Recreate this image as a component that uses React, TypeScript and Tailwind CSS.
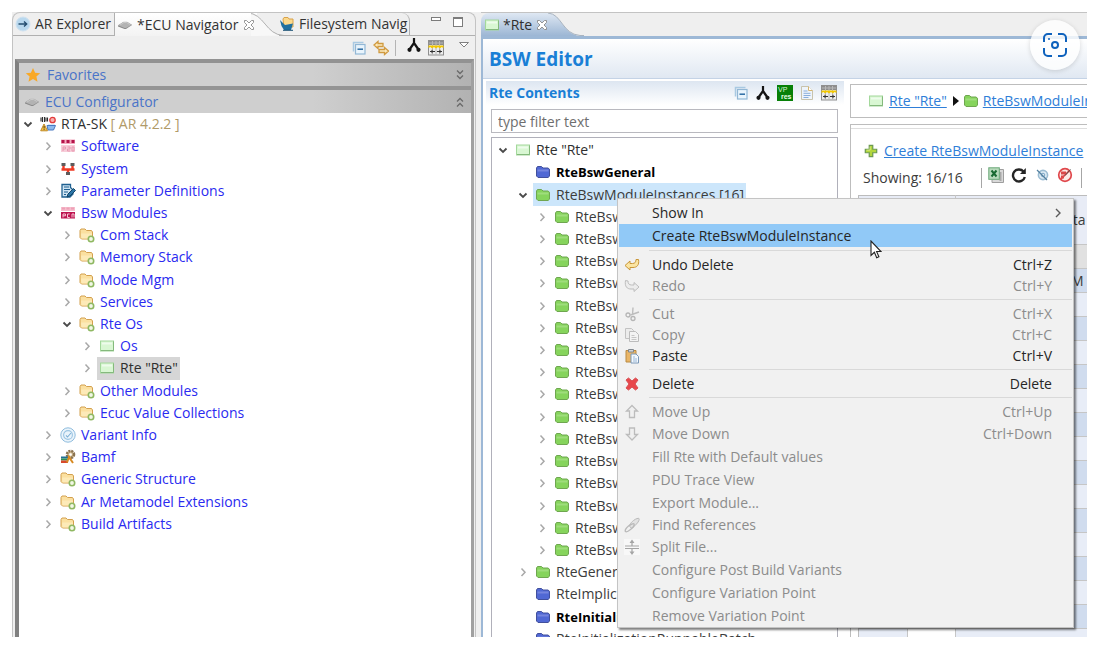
import { useState } from 'react'
import type { ReactNode } from 'react'

/* ---------- Icons ---------- */

function Svg({ children, className = 'w-4 h-4' }: { children: ReactNode; className?: string }) {
  return (
    <svg viewBox="0 0 16 16" className={`${className} shrink-0`} fill="none" aria-hidden="true">
      {children}
    </svg>
  )
}

const ModuleIcon = () => (
  <Svg>
    <rect x="1.5" y="3" width="13" height="10" fill="#d9f7d3" stroke="#a3d89b" />
    <path d="M2 12.5h12.5V3.5" stroke="#84b97c" />
    <rect x="3" y="4.5" width="10" height="2" fill="#eefcec" />
  </Svg>
)

const FolderShape = ({ fill, top, stroke }: { fill: string; top: string; stroke: string }) => (
  <Svg>
    <path d="M1.5 4 2.5 2.5h4L8 4h5l1.5 1.2v7L13 13.5H3L1.5 12z" fill={fill} stroke={stroke} />
    <path d="M2.5 5.5h11v2h-11z" fill={top} />
  </Svg>
)

const GreenFolder = () => <FolderShape fill="#86d45c" top="#9fdd7c" stroke="#6fa650" />
const BlueFolder = () => <FolderShape fill="#5068d4" top="#7585de" stroke="#42509c" />

const PackageFolder = () => (
  <Svg>
    <path d="M1 3.5 2 2h4l1.5 1.5h5l1 1.5v7h-11L1 10.5z" fill="#fbe0a0" stroke="#d3a04e" />
    <path d="M2 6.5h11v5H2.500z" fill="#fdeab8" />
    <circle cx="12" cy="12" r="2.700" fill="#f2f7e6" stroke="#8fb862" strokeWidth="1.600" />
  </Svg>
)

const ProjectIcon = () => (
  <Svg>
    <path d="M1 1.500v4M2.500 1v5M4.500 1v5M6 1.500v4M7.500 1.500v4" stroke="#2e2e2e" strokeWidth="1.100" />
    <circle cx="12.500" cy="4" r="2.700" fill="#f8b0b0" stroke="#e23a3a" strokeWidth="1.300" />
    <path d="M7 9.500h8.500L13.500 14H8z" fill="#8db9ee" stroke="#4878c0" />
    <path d="M8 8.500h7" stroke="#d8e8fa" />
    <path d="M4 8 .7 14.800h6.800z" fill="#f2c34c" stroke="#c08a26" />
    <path d="M4.100 10v2.500M4.100 13.200v.8" stroke="#5a3c08" />
  </Svg>
)

const SoftwareIcon = () => (
  <Svg>
    <rect x="1" y="1.500" width="14" height="4.500" fill="#f3a9bf" />
    <path d="M1.500 2h3v3h-3zM6.500 2h3v3h-3zM11.500 2h3v3h-3z" fill="#b4134a" />
    <rect x="1" y="7" width="14" height="7" fill="#f7cdd9" />
    <path d="M3 13V9h2.500v2H3M7.500 9h2.500v2H7.500v2H10M12 13V9h2v4z" stroke="#e89ab2" />
  </Svg>
)

const BswIcon = () => (
  <Svg>
    <rect x="1" y="2" width="14" height="4" fill="#f6bdcd" />
    <path d="M2 3.500h3M6.500 3.500h3M11 3.500h3" stroke="#eea0b6" strokeWidth="2" />
    <rect x="1" y="7" width="14" height="6.500" fill="#bd1450" />
    <path d="M3 12.500V9h2.500v1.800H3M9.700 9H7.500v3.500h2.200M12 12.500V9h2v3.500" stroke="#f7c4d4" />
  </Svg>
)

const SystemIcon = () => (
  <Svg>
    <path d="M1.500 8.500h13M3.500 4v4.500M12.500 4v4.500M8 8.500V13" stroke="#ee3a24" strokeWidth="2.400" />
    <path d="M1.500 2h4v3h-4zM10.500 2h4v3h-4zM6 11h4v3H6z" fill="#5c5c5c" />
  </Svg>
)

const ParameterIcon = () => (
  <Svg>
    <path d="M2 1.500h8.500v3L13 7v4l-3 3H2z" fill="#cfe4f3" stroke="#1f6090" strokeWidth="1.300" />
    <path d="M4 4h5M4 6.500h6M4 9h4M4 11.500h2" stroke="#1f6090" strokeWidth="1.100" />
    <path d="m7 14 1-3 5.500-5.500 2 2L10 13z" fill="#2c76a8" stroke="#124566" />
  </Svg>
)

const VariantIcon = () => (
  <Svg>
    <circle cx="8" cy="8" r="7.200" fill="#eaf4fb" stroke="#8fbcdd" />
    <circle cx="8" cy="8" r="4.400" stroke="#9cc5e2" strokeWidth="1.100" />
    <path d="M6 8.300 7.500 10 11 6" stroke="#7db0d6" strokeWidth="1.100" />
  </Svg>
)

const BamfIcon = () => (
  <Svg>
    <circle cx="10.500" cy="5.500" r="3.500" fill="#d8c39a" stroke="#8b7350" strokeWidth="2.600" strokeDasharray="2 .8" />
    <circle cx="10.500" cy="5.500" r="1.300" fill="#fff" />
    <path d="M1 7.500h7v2H1z" fill="#1f6e94" />
    <path d="M1 9.500h7v2H1z" fill="#2f8f55" />
    <path d="M1 11.500h7V14H1z" fill="#d8492d" />
    <path d="m7 13.500 2-5.500 4 6" stroke="#d88a22" strokeWidth="2" />
  </Svg>
)

const ExplorerIcon = () => (
  <Svg>
    <circle cx="8" cy="8" r="7" fill="#b9d8ee" stroke="#cfe2f0" />
    <path d="M3.500 8h8M9 5.500 11.700 8 9 10.500" stroke="#254d70" strokeWidth="1.400" />
  </Svg>
)

const EcuIcon = () => (
  <Svg>
    <path d="M1 8.500 6.500 5h3.500l5 3-6 4H7.500L1 9.500z" fill="#8a8a8a" />
    <path d="M1 8.300 6.500 4.700H10l5 3L9 11H7.500z" fill="#b3b3b3" />
    <path d="M3 8 7 5.500h2.500L13 7.500" stroke="#c9c9c9" />
  </Svg>
)

const FilesystemIcon = () => (
  <Svg>
    <path d="M4 3 5 1.500h4L10 3h4v8H5z" fill="#fbd98c" stroke="#d9a24a" />
    <path d="m1 4 5 5 8-1.500L12 14H5L2.500 10z" fill="#20709f" />
    <path d="M4 14.300h10" stroke="#174f74" />
  </Svg>
)

const StarIcon = () => (
  <Svg>
    <path d="m8 1 2.100 4.700 5.100.5-3.800 3.400 1.100 5.100L8 12.100l-4.500 2.600 1.100-5.100L.8 6.200l5.100-.5z" fill="#f9a825" />
  </Svg>
)

const CollapseIcon = () => (
  <Svg>
    <path d="M2.500 11.500v-9h10" stroke="#a9c9e2" strokeWidth="1.500" />
    <rect x="4.500" y="4.500" width="9.500" height="9.500" fill="#e9f4fc" stroke="#92b7d5" strokeWidth="1.200" />
    <path d="M6.500 9.200H12" stroke="#2c6ca4" strokeWidth="1.500" />
  </Svg>
)

const LinkEditorIcon = () => (
  <Svg>
    <path d="M1 5 5 1.500V3.500h5v3H5v2z" fill="#fdeabc" stroke="#d09a40" strokeWidth="1.300" />
    <path d="m15.500 11-4-3.500v2H6v3h5.500v2z" fill="#fdeabc" stroke="#d09a40" strokeWidth="1.300" />
  </Svg>
)

const BranchIcon = () => (
  <Svg>
    <path d="M8 1v6M8 6 3.500 12.500M8 6l4.500 6.500" stroke="#141414" strokeWidth="2.200" />
    <circle cx="3.500" cy="12.800" r="2.100" fill="#141414" />
    <circle cx="12.500" cy="12.800" r="2.100" fill="#141414" />
  </Svg>
)

const GridIcon = () => (
  <Svg>
    <rect x=".5" y=".5" width="15" height="14.500" fill="#ededed" stroke="#8f8f8f" />
    <path d="M1 1h14v4H1z" fill="#8c8c8c" />
    <path d="M4.500 1v14M8 1v14M11.500 1v14M1 3h14" stroke="#b8b8b8" />
    <path d="M.5 5.500h15V8l-2-1-1.500 1.500-2-1.500L8 8.500 6 7 4 8.500 2.500 7l-2 1z" fill="#f3c800" />
    <path d="M2 11.500h5M9 11.500h5M4 9.800v3.400M12 9.800v3.400" stroke="#333" />
  </Svg>
)

const VpIcon = () => (
  <svg viewBox="0 0 16 16" className="w-4 h-4 shrink-0" aria-hidden="true">
    <rect width="16" height="16" fill="#078007" />
    <text x="1" y="7" fontSize="7" fill="#d9f5d9" fontFamily="Liberation Sans, sans-serif">VP</text>
    <text x="4" y="14" fontSize="7" fontWeight="bold" fill="#e6ffe6" fontFamily="Liberation Sans, sans-serif">res</text>
  </svg>
)

const DocIcon = () => (
  <Svg>
    <path d="M2.500 1.500h7l4 4v9h-11z" fill="#eef4fb" stroke="#c8c3ad" />
    <path d="M9.500 1.500v4h4" fill="#fff" stroke="#d5b570" />
    <path d="M4.500 6h4M4.500 8.300h7M4.500 10.500h7M4.500 12.500h5" stroke="#8aaedb" />
  </Svg>
)

const PlusIcon = () => (
  <Svg className="w-3.5 h-3.5">
    <path d="M6 1.500h4V6h4.500v4H10v4.500H6V10H1.500V6H6z" fill="#b2d63c" stroke="#6c9a50" strokeWidth="1.400" />
    <path d="M7 3v4H3" stroke="#dcee98" />
  </Svg>
)

const ExcelIcon = () => (
  <Svg>
    <path d="M5 2.500h10.500v13H4v-3" fill="#d9d9d9" stroke="#9e9e9e" />
    <path d="M12.500 5v9" stroke="#a9a9a9" strokeWidth="2" />
    <rect x=".8" y=".8" width="10.500" height="11.500" fill="#b9dbbd" stroke="#6aa777" />
    <path d="m3.500 3.500 5 6M8.500 3.500l-5 6" stroke="#186a31" strokeWidth="2" />
  </Svg>
)

const RefreshIcon = () => (
  <Svg>
    <path d="M12.500 4.500A6 6 0 1 0 13.800 10" stroke="#252525" strokeWidth="2.400" />
    <path d="M14.800 1v6H9z" fill="#252525" />
  </Svg>
)

const TargetIcon = () => (
  <Svg>
    <circle cx="9" cy="8" r="4.600" fill="#dfecf5" stroke="#9bbcd2" strokeWidth="1.600" />
    <circle cx="9" cy="8" r="1.800" stroke="#7ba6c4" />
    <path d="m3 3 10 10" stroke="#54809f" strokeWidth="1.300" />
  </Svg>
)

const BlockedIcon = () => (
  <Svg>
    <circle cx="8" cy="8" r="6.300" fill="#fbe9e9" stroke="#e0484c" strokeWidth="1.700" />
    <path d="M4 4.500h5v3H4zM4 8.500h3v3H4z" fill="#d9474b" />
    <path d="M12.500 3.500 3.500 12.500" stroke="#e0484c" strokeWidth="1.700" />
    <path d="M13.500 2.500 8 8.500" stroke="#505050" />
  </Svg>
)

const CloseIcon = ({ stroke = '#8a8a8a' }: { stroke?: string }) => (
  <svg viewBox="0 0 12 12" className="relative z-10 w-3 h-3 shrink-0" fill="none" aria-hidden="true">
    <path
      d="M1.500 1.500h2L6 4l2.500-2.500h2v2L8 6l2.500 2.500v2h-2L6 8l-2.500 2.500h-2v-2L4 6 1.500 3.500z"
      fill="#fff"
      stroke={stroke}
      strokeWidth=".9"
    />
  </svg>
)

const UndoIcon = () => (
  <Svg>
    <path d="M1 8.500 6 4v2.500h2.500C11 6.500 12 5 12 2.500h2.500C15.500 8 13 10.500 9 10.500H6V13z" fill="#fbe5a2" stroke="#c9973a" />
  </Svg>
)

const RedoIcon = () => (
  <Svg>
    <path d="M15 9 10 4.500V7H7.500C5 7 4 5.500 4 3L1.500 2.500C.5 8.500 3 11 7 11h3v2.500z" fill="#ececec" stroke="#bdbdbd" />
  </Svg>
)

const CutIcon = () => (
  <Svg>
    <path d="M9 1.500 8.500 9M15 6 6.500 9" stroke="#bdbdbd" strokeWidth="1.400" />
    <circle cx="4" cy="9" r="2" stroke="#b5b5b5" strokeWidth="1.300" />
    <circle cx="9" cy="12.500" r="2" stroke="#b5b5b5" strokeWidth="1.300" />
  </Svg>
)

const CopyIcon = () => (
  <Svg>
    <path d="M1.500 1.500h6l2 2v8h-8z" fill="#ececec" stroke="#c2c2c2" />
    <path d="M5.500 4.500h6l3 3v7h-9z" fill="#f3f3f3" stroke="#bcbcbc" />
    <path d="M7.500 8.500h3M7.500 10.500h5M7.500 12.500h5" stroke="#c6c6c6" />
  </Svg>
)

const PasteIcon = () => (
  <Svg>
    <path d="M2 2.500h10v11.500H2z" fill="#e9b566" stroke="#b98a42" />
    <path d="M4.500 1.500h5v2.500h-5z" fill="#d2d6da" stroke="#808890" />
    <path d="M7 6h5l2.500 2.500v6.500H7z" fill="#f3f8fd" stroke="#7a98b8" />
    <path d="M9 9h2M9 11h4M9 13h4" stroke="#9ab8d8" />
  </Svg>
)

const DeleteIcon = () => (
  <Svg>
    <path d="M2 4 4.500 2 8 5l3.500-3L14 4l-3 4 3 4-2.500 2L8 11l-3.500 3L2 12l3-4z" fill="#e8474b" stroke="#d85054" />
  </Svg>
)

const UpIcon = () => (
  <Svg>
    <path d="m8 1.500 5.500 5.500h-3v6.500h-5V7h-3z" fill="#f0f0f0" stroke="#bcbcbc" strokeWidth="1.300" />
  </Svg>
)

const DownIcon = () => (
  <Svg>
    <path d="m8 14-5.500-5.500h3V2h5v6.500h3z" fill="#f0f0f0" stroke="#bcbcbc" strokeWidth="1.300" />
  </Svg>
)

const ReferenceIcon = () => (
  <Svg>
    <path d="M6.500 10.500c-2-2 0-4.500 3-7C12 1.500 14.500 1 15 1.500s0 3-2.500 5.500c-2.500 2.500-4.500 5-6 3.500z" fill="#e2e2e2" stroke="#b9b9b9" />
    <path d="M1.500 14.500c-1-1 1-4 3-5.500s5-3 5.500-2-1 3.500-3.500 5.500-4.500 2.500-5 2z" stroke="#b9b9b9" strokeWidth="1.400" />
  </Svg>
)

const SplitIcon = () => (
  <Svg>
    <rect width="16" height="16" fill="#f8f8f8" />
    <path d="M1 7h14M1 9.500h14M8 2.500V7M8 9.500v4" stroke="#a5a5a5" strokeWidth="1.200" />
    <path d="M8 .5 10.500 4h-5zM8 16l2.500-3.500h-5z" fill="#a5a5a5" />
  </Svg>
)

const Chevron = ({ open }: { open?: boolean }) =>
  open ? (
    <Svg>
      <path d="m4.500 6.500 3.500 3.500 3.500-3.500" stroke="#4a4a4a" strokeWidth="1.800" />
    </Svg>
  ) : (
    <Svg>
      <path d="m6.500 4.500 3.500 3.700-3.500 3.700" stroke="#a8a8a8" strokeWidth="1.500" />
    </Svg>
  )

/* ---------- Tree ---------- */

interface TreeNode {
  label: string
  level: number
  icon: ReactNode
  open?: boolean
  leaf?: boolean
  bold?: boolean
  suffix?: string
}

const indent = ['pl-0', 'pl-5', 'pl-[39px]', 'pl-[59px]']

interface TreeProps {
  nodes: TreeNode[]
  name: string
  initial: string
  rowText: string
  selectedClass: string
  className: string
}

function Tree({ nodes, name, initial, rowText, selectedClass, className }: TreeProps) {
  const [selected, setSelected] = useState(initial)

  return (
    <ul role="tree" aria-label={name} className={`grid shrink-0 auto-rows-fr ${className}`}>
      {nodes.map((n, i) => (
        <li
          key={i}
          role="treeitem"
          aria-expanded={n.leaf ? undefined : !!n.open}
          className={`flex items-center gap-0.5 min-h-0 ${indent[n.level]}`}
        >
          <span className="w-4 shrink-0">{!n.leaf && <Chevron open={n.open} />}</span>
          <button
            onClick={() => setSelected(n.label)}
            className={`flex items-center gap-[5px] h-full px-0.5 whitespace-nowrap ${
              n.bold ? 'text-[13px] font-bold text-black' : ''
            } ${selected === n.label ? selectedClass : n.bold ? '' : n.level === 0 ? 'text-[#2f2f2f]' : rowText}`}
          >
            {n.icon}
            <span>
              {n.label}
              {n.suffix && <span className="text-[#b09a68]"> {n.suffix}</span>}
            </span>
          </button>
        </li>
      ))}
    </ul>
  )
}

const ecuNodes: TreeNode[] = [
  { label: 'RTA-SK', suffix: '[ AR 4.2.2 ]', level: 0, icon: <ProjectIcon />, open: true },
  { label: 'Software', level: 1, icon: <SoftwareIcon /> },
  { label: 'System', level: 1, icon: <SystemIcon /> },
  { label: 'Parameter Definitions', level: 1, icon: <ParameterIcon /> },
  { label: 'Bsw Modules', level: 1, icon: <BswIcon />, open: true },
  { label: 'Com Stack', level: 2, icon: <PackageFolder /> },
  { label: 'Memory Stack', level: 2, icon: <PackageFolder /> },
  { label: 'Mode Mgm', level: 2, icon: <PackageFolder /> },
  { label: 'Services', level: 2, icon: <PackageFolder /> },
  { label: 'Rte Os', level: 2, icon: <PackageFolder />, open: true },
  { label: 'Os', level: 3, icon: <ModuleIcon /> },
  { label: 'Rte "Rte"', level: 3, icon: <ModuleIcon /> },
  { label: 'Other Modules', level: 2, icon: <PackageFolder /> },
  { label: 'Ecuc Value Collections', level: 2, icon: <PackageFolder /> },
  { label: 'Variant Info', level: 1, icon: <VariantIcon /> },
  { label: 'Bamf', level: 1, icon: <BamfIcon /> },
  { label: 'Generic Structure', level: 1, icon: <PackageFolder /> },
  { label: 'Ar Metamodel Extensions', level: 1, icon: <PackageFolder /> },
  { label: 'Build Artifacts', level: 1, icon: <PackageFolder /> },
]

const rteNodes: TreeNode[] = [
  { label: 'Rte "Rte"', level: 0, icon: <ModuleIcon />, open: true },
  { label: 'RteBswGeneral', level: 1, icon: <BlueFolder />, leaf: true, bold: true },
  { label: 'RteBswModuleInstances [16]', level: 1, icon: <GreenFolder />, open: true },
  ...Array.from({ length: 16 }, () => ({ label: 'RteBsw', level: 2, icon: <GreenFolder /> })),
  { label: 'RteGeneration', level: 1, icon: <GreenFolder /> },
  { label: 'RteImplicit', level: 1, icon: <BlueFolder />, leaf: true },
  { label: 'RteInitialization', level: 1, icon: <BlueFolder />, leaf: true, bold: true },
  { label: 'RteInitializationRunnableBatch', level: 1, icon: <BlueFolder />, leaf: true },
]

/* ---------- Context menu ---------- */

interface MenuItem {
  label: string
  keys?: string
  icon?: ReactNode
  disabled?: boolean
  active?: boolean
  submenu?: boolean
}

interface MenuGroup {
  iconRow: string
  items: MenuItem[]
}

const menu: MenuGroup[] = [
  {
    iconRow: 'h-[21px]',
    items: [
      { label: 'Show In', submenu: true },
      { label: 'Create RteBswModuleInstance', active: true },
    ],
  },
  {
    iconRow: 'h-[21px]',
    items: [
      { label: 'Undo Delete', keys: 'Ctrl+Z', icon: <UndoIcon /> },
      { label: 'Redo', keys: 'Ctrl+Y', icon: <RedoIcon />, disabled: true },
    ],
  },
  {
    iconRow: 'h-[21px]',
    items: [
      { label: 'Cut', keys: 'Ctrl+X', icon: <CutIcon />, disabled: true },
      { label: 'Copy', keys: 'Ctrl+C', icon: <CopyIcon />, disabled: true },
      { label: 'Paste', keys: 'Ctrl+V', icon: <PasteIcon /> },
    ],
  },
  {
    iconRow: 'h-[21px]',
    items: [{ label: 'Delete', keys: 'Delete', icon: <DeleteIcon /> }],
  },
  {
    iconRow: 'h-[22px]',
    items: [
      { label: 'Move Up', keys: 'Ctrl+Up', icon: <UpIcon />, disabled: true },
      { label: 'Move Down', keys: 'Ctrl+Down', icon: <DownIcon />, disabled: true },
      { label: 'Fill Rte with Default values', disabled: true },
      { label: 'PDU Trace View', disabled: true },
      { label: 'Export Module...', disabled: true },
      { label: 'Find References', icon: <ReferenceIcon />, disabled: true },
      { label: 'Split File...', icon: <SplitIcon />, disabled: true },
      { label: 'Configure Post Build Variants', disabled: true },
      { label: 'Configure Variation Point', disabled: true },
      { label: 'Remove Variation Point', disabled: true },
    ],
  },
]

function ContextMenu() {
  return (
    <div
      role="menu"
      className="absolute left-[617px] top-[198px] w-[457px] pt-0.5 px-px bg-[#f1f1f1] border border-[#c4c4c4] shadow-[2px_2px_2px_rgba(0,0,0,0.5)]"
    >
      {menu.map((group, i) => (
        <div key={i}>
          {i > 0 && (
            <div className="h-[7px] py-[3px] pl-[30px]">
              <div className="h-px bg-[#d9d9d9]" />
            </div>
          )}
          {group.items.map(item => (
            <button
              key={item.label}
              role="menuitem"
              disabled={item.disabled}
              className={`flex items-center w-full pl-[5px] pr-5 text-left ${item.icon ? group.iconRow : 'h-[23px]'} ${
                item.active ? 'bg-[#91c9f7]' : ''
              } ${item.disabled ? 'text-[#8c8c8c]' : 'text-[#262626]'}`}
            >
              <span className="w-4 mr-3">{item.icon}</span>
              <span className="flex-1">{item.label}</span>
              {item.keys && <span>{item.keys}</span>}
              {item.submenu && (
                <svg viewBox="0 0 8 12" className="w-2 h-3 -mr-2.5" fill="none" aria-hidden="true">
                  <path d="m2 2 4 4-4 4" stroke="#5a5a5a" strokeWidth="1.400" />
                </svg>
              )}
            </button>
          ))}
        </div>
      ))}
      <svg viewBox="0 0 12 19" className="absolute left-[252px] top-[41px] w-3 h-[19px]" aria-hidden="true">
        <path d="M1 1v14.500l3.400-3.200 2.300 5.400 2.200-1-2.300-5.200H11z" fill="#fff" stroke="#222" strokeWidth="1.100" />
      </svg>
    </div>
  )
}

/* ---------- Left view ---------- */

function IconButton({ label, children }: { label: string; children: ReactNode }) {
  return (
    <button aria-label={label} className="shrink-0">
      {children}
    </button>
  )
}

function Navigator() {
  return (
    <section className="flex flex-col w-[464px] shrink-0 min-h-0 bg-[#efefef] border-l border-r border-t border-[#c3c3c3] rounded-t-lg">
      {/* View tabs */}
      <div role="tablist" className="flex h-[23px] shrink-0">
        <button role="tab" className="flex items-center gap-1 pl-0.5 w-[102px] whitespace-nowrap border-b border-r border-[#b0b0b0] rounded-tl-lg">
          <ExplorerIcon />
          AR Explorer
        </button>
        <button role="tab" aria-selected="true" className="flex items-center pl-0.5 pr-0.5 w-[142px] whitespace-nowrap bg-linear-to-b from-white to-[#f3f3f3]">
          <EcuIcon />
          <span className="ml-1 flex-1 text-left">*ECU Navigator</span>
          <CloseIcon />
        </button>
        <svg viewBox="0 0 34 23" className="-ml-1.5 w-[34px] h-[23px] shrink-0" fill="none" aria-hidden="true">
          <path d="M0 0C14 1 14 22 33 22.500L0 23z" fill="#f8f8f8" />
          <path d="M-4 0C14 0 14 22 33 22.500h1" stroke="#b0b0b0" />
        </svg>
        <button role="tab" className="flex items-center gap-1 -ml-1.5 w-[131px] whitespace-nowrap overflow-hidden border-b border-[#b0b0b0] border-r rounded-tr-lg">
          <FilesystemIcon />
          Filesystem Navig
        </button>
        <div className="flex-1 flex justify-end gap-3 pt-1 pr-3 border-b border-[#b0b0b0]">
          <button aria-label="Minimize" className="w-2.5 h-1 border border-[#7c7c7c] bg-white" />
          <button aria-label="Maximize" className="w-2.5 h-2.5 border border-t-2 border-[#7c7c7c] bg-white" />
        </div>
      </div>

      {/* View toolbar */}
      <div className="flex items-center justify-end gap-1.5 h-[23px] shrink-0 pr-[5px]">
        <IconButton label="Collapse all"><CollapseIcon /></IconButton>
        <IconButton label="Link with editor"><LinkEditorIcon /></IconButton>
        <span className="w-px h-4 bg-[#b4b4b4]" />
        <span className="ml-1"><IconButton label="Variants"><BranchIcon /></IconButton></span>
        <IconButton label="Columns"><GridIcon /></IconButton>
        <button aria-label="View menu" className="ml-2 mb-1.5">
          <svg viewBox="0 0 12 8" className="w-3 h-2" aria-hidden="true">
            <path d="M1.500 1.500h9L6 6z" fill="#fff" stroke="#808080" />
          </svg>
        </button>
      </div>

      {/* Stacked sections */}
      <div className="flex-1 flex flex-col min-h-0 ml-0.5 mr-px border-l-4 border-r-[3px] border-t-4 border-l-[#808080] border-r-[#a0a0a0] border-t-[#929292] bg-white">
        <button className="flex items-center gap-1.5 h-[23px] shrink-0 px-1.5 text-[#4a74c8] bg-linear-to-r from-[#cfcfcf] from-65% to-[#b2b2b2]">
          <StarIcon />
          <span className="flex-1 text-left">Favorites</span>
          <svg viewBox="0 0 10 12" className="w-2.5 h-3" fill="none" stroke="#6a6a6a" strokeWidth="1.300" aria-hidden="true">
            <path d="m2 1.500 3 3 3-3M2 6.500l3 3 3-3" />
          </svg>
        </button>
        <div className="h-1 shrink-0 bg-[#949494]" />
        <button className="flex items-center gap-[5px] h-[23px] shrink-0 pl-[5px] pr-1.5 text-[#4a74c8] bg-linear-to-r from-[#cfcfcf] from-65% to-[#b2b2b2]">
          <EcuIcon />
          <span className="flex-1 text-left">ECU Configurator</span>
          <svg viewBox="0 0 10 12" className="w-2.5 h-3" fill="none" stroke="#6a6a6a" strokeWidth="1.300" aria-hidden="true">
            <path d="m2 5.500 3-3 3 3M2 10.500l3-3 3 3" />
          </svg>
        </button>
        <div className="flex-1 min-h-0 overflow-hidden pl-px">
          <Tree
            name="ECU Configurator"
            nodes={ecuNodes}
            initial={'Rte "Rte"'}
            rowText="text-[#2a2af0]"
            selectedClass="bg-[#d6d6d6] text-[#2f2f2f]"
            className="h-[422px]"
          />
        </div>
      </div>
    </section>
  )
}

/* ---------- Right editor ---------- */

const rows = Array.from({ length: 16 }, (_, i) => (i === 0 ? 'M' : ''))

function Details() {
  return (
    <div className="flex-1 flex flex-col min-w-0 gap-1.5 pt-[3px] overflow-hidden">
      <nav className="flex items-center h-[34px] shrink-0 pl-[17px] border border-r-0 border-[#bdbdbd] whitespace-nowrap">
        <ModuleIcon />
        <a href="#rte" className="ml-[5px] text-[#2f7ed8] underline">Rte "Rte"</a>
        <svg viewBox="0 0 6 10" className="w-1.5 h-2.5 ml-1.5 mr-1 shrink-0" aria-hidden="true">
          <path d="M0 0l6 5-6 5z" fill="#111" />
        </svg>
        <GreenFolder />
        <a href="#instances" className="ml-1 text-[#2f7ed8] underline">RteBswModuleInstances</a>
      </nav>

      <div className="flex-1 flex flex-col min-h-0 border-l border-t border-[#bdbdbd]">
        <div className="mt-[3px] border-t border-[#dedede] flex items-center gap-1.5 pl-[13px] pt-3 whitespace-nowrap shrink-0">
          <PlusIcon />
          <a href="#create" className="text-[#2f7ed8] underline">Create RteBswModuleInstance</a>
        </div>
        <div className="flex items-center h-7 shrink-0 mt-[3px] pl-3 text-[#3c3c3c] whitespace-nowrap">
          <span className="w-[118px]">Showing: 16/16</span>
          <span className="w-px h-5 bg-[#a6a6a6]" />
          <span className="flex items-center gap-[7px] ml-1.5 mr-2 pb-1.5">
            <IconButton label="Export to Excel"><ExcelIcon /></IconButton>
            <IconButton label="Refresh"><RefreshIcon /></IconButton>
            <IconButton label="Locate"><TargetIcon /></IconButton>
            <IconButton label="Clear filter"><BlockedIcon /></IconButton>
          </span>
          <span className="w-px h-5 bg-[#a6a6a6]" />
        </div>
        <div className="flex-1 min-h-0 overflow-hidden mt-[3px] pl-[7px]">
          <table className="w-full table-fixed border-collapse border-l border-t border-[#bcbcbc]">
            <thead>
              <tr className="h-[49px] bg-[#e8ecf6]">
                <th className="w-[49px]" />
                <th className="w-12 border-r border-[#c6c6c6]" />
                <th className="pl-[110px] font-normal text-left text-[#3c3c3c]">sta</th>
              </tr>
            </thead>
            <tbody>
              <tr className="h-6 bg-[#e1e1e1] border-t border-[#c6c6c6]">
                <td /><td /><td />
              </tr>
              {rows.map((text, i) => (
                <tr key={i} className={`h-6 border-t border-[#c6c6c6] ${i % 2 ? 'bg-[#e8edf7]' : 'bg-[#d0dcee]'}`}>
                  <td className="border-r border-[#c6c6c6]" />
                  <td className="bg-white border-r border-[#c6c6c6]" />
                  <td className="pl-[115px] leading-5 text-[#3c3c3c]">{text}</td>
                </tr>
              ))}
            </tbody>
          </table>
        </div>
      </div>
    </div>
  )
}

function Editor() {
  return (
    <section className="flex-1 flex flex-col min-w-0 min-h-0 border-t border-[#c3c3c3]">
      <div role="tablist" className="flex h-[23px] shrink-0 bg-[#efefef]">
        <button role="tab" aria-selected="true" className="flex items-center pl-[3px] w-[67px] whitespace-nowrap rounded-tl-lg bg-linear-to-b from-[#dfe8f3] to-[#9cb6d4] text-[#2f2f2f]">
          <ModuleIcon />
          <span className="mx-[3px] flex-1 text-left">*Rte</span>
          <CloseIcon />
        </button>
        <svg viewBox="0 0 36 23" className="w-9 h-[23px]" fill="none" aria-hidden="true">
          <defs>
            <linearGradient id="tabFill" x2="0" y2="1">
              <stop stopColor="#dfe8f3" />
              <stop offset="1" stopColor="#9cb6d4" />
            </linearGradient>
          </defs>
          <path d="M0 0C14 1 14 21 32 23H0z" fill="url(#tabFill)" />
          <path d="M0 0C14 1 14 21 32 22.500h4" stroke="#a9b4c0" />
        </svg>
      </div>

      <div className="flex-1 flex flex-col min-h-0 border-t-[3px] border-l-2 border-[#9db8d6] bg-white">
        <header className="flex items-center h-10 shrink-0 pl-1.5 bg-linear-to-b from-white to-[#e0e8f2] border-b border-[#c4d3e6]">
          <h1 className="text-[19px] font-bold text-[#1a7fd6]">BSW Editor</h1>
        </header>

        <div className="flex-1 flex min-h-0 gap-1.5 pl-[3px] pt-0.5">
          {/* Contents */}
          <div className="flex flex-col w-[358px] shrink-0 min-h-0">
            <div className="flex items-center gap-1.5 h-6 shrink-0 pl-[3px] pr-[7px] bg-linear-to-b from-[#dde6f1] to-white">
              <h2 className="flex-1 font-bold text-[#1a7fd6]">Rte Contents</h2>
              <IconButton label="Collapse all"><CollapseIcon /></IconButton>
              <IconButton label="Variants"><BranchIcon /></IconButton>
              <IconButton label="Variation point resolution"><VpIcon /></IconButton>
              <IconButton label="Documentation"><DocIcon /></IconButton>
              <IconButton label="Columns"><GridIcon /></IconButton>
            </div>
            <input
              aria-label="Filter"
              placeholder="type filter text"
              className="h-6 shrink-0 ml-[5px] mr-1.5 mt-1 px-1.5 border border-[#b9b9bf] outline-none text-[#3c3c3c] placeholder:text-[#6e6e6e]"
            />
            <div className="flex-1 min-h-0 ml-[5px] mr-1.5 mt-1 pt-px pl-[3px] border border-b-0 border-[#b0b0ba] overflow-hidden">
              <Tree
                name="Rte Contents"
                nodes={rteNodes}
                initial="RteBswModuleInstances [16]"
                rowText="text-[#3c3c3c]"
                selectedClass="bg-[#cce6fb] text-[#3c3c3c]"
                className="h-[511px]"
              />
            </div>
          </div>

          <Details />
        </div>
      </div>
    </section>
  )
}

export default function App() {
  return (
    <main className="relative h-screen overflow-hidden bg-white pt-3 pl-3 pr-[17px] pb-3.5 font-['Open_Sans','Noto_Sans',sans-serif] text-[14px] leading-5 text-[#333]">
      <div className="flex gap-[5px] h-full min-h-0 overflow-hidden bg-[#efefef]">
        <Navigator />
        <Editor />
      </div>

      <ContextMenu />

      {/* Visual search */}
      <button
        aria-label="Visual search"
        className="absolute right-6 top-5 flex items-center justify-center w-[50px] h-[50px] rounded-full bg-white/80 shadow-[0_1px_5px_rgba(0,0,0,0.15)]"
      >
        <svg viewBox="0 0 24 24" className="w-6 h-6" fill="none" stroke="#0f62bd" strokeWidth="2" aria-hidden="true">
          <path d="M1 9V5a4 4 0 0 1 4-4h4M15 1h4a4 4 0 0 1 4 4v4M23 15v4a4 4 0 0 1-4 4h-4M9 23H5a4 4 0 0 1-4-4v-4" />
          <circle cx="12" cy="12" r="3" />
          <circle cx="6" cy="6" r="1" fill="#0f62bd" stroke="none" />
        </svg>
      </button>
    </main>
  )
}
